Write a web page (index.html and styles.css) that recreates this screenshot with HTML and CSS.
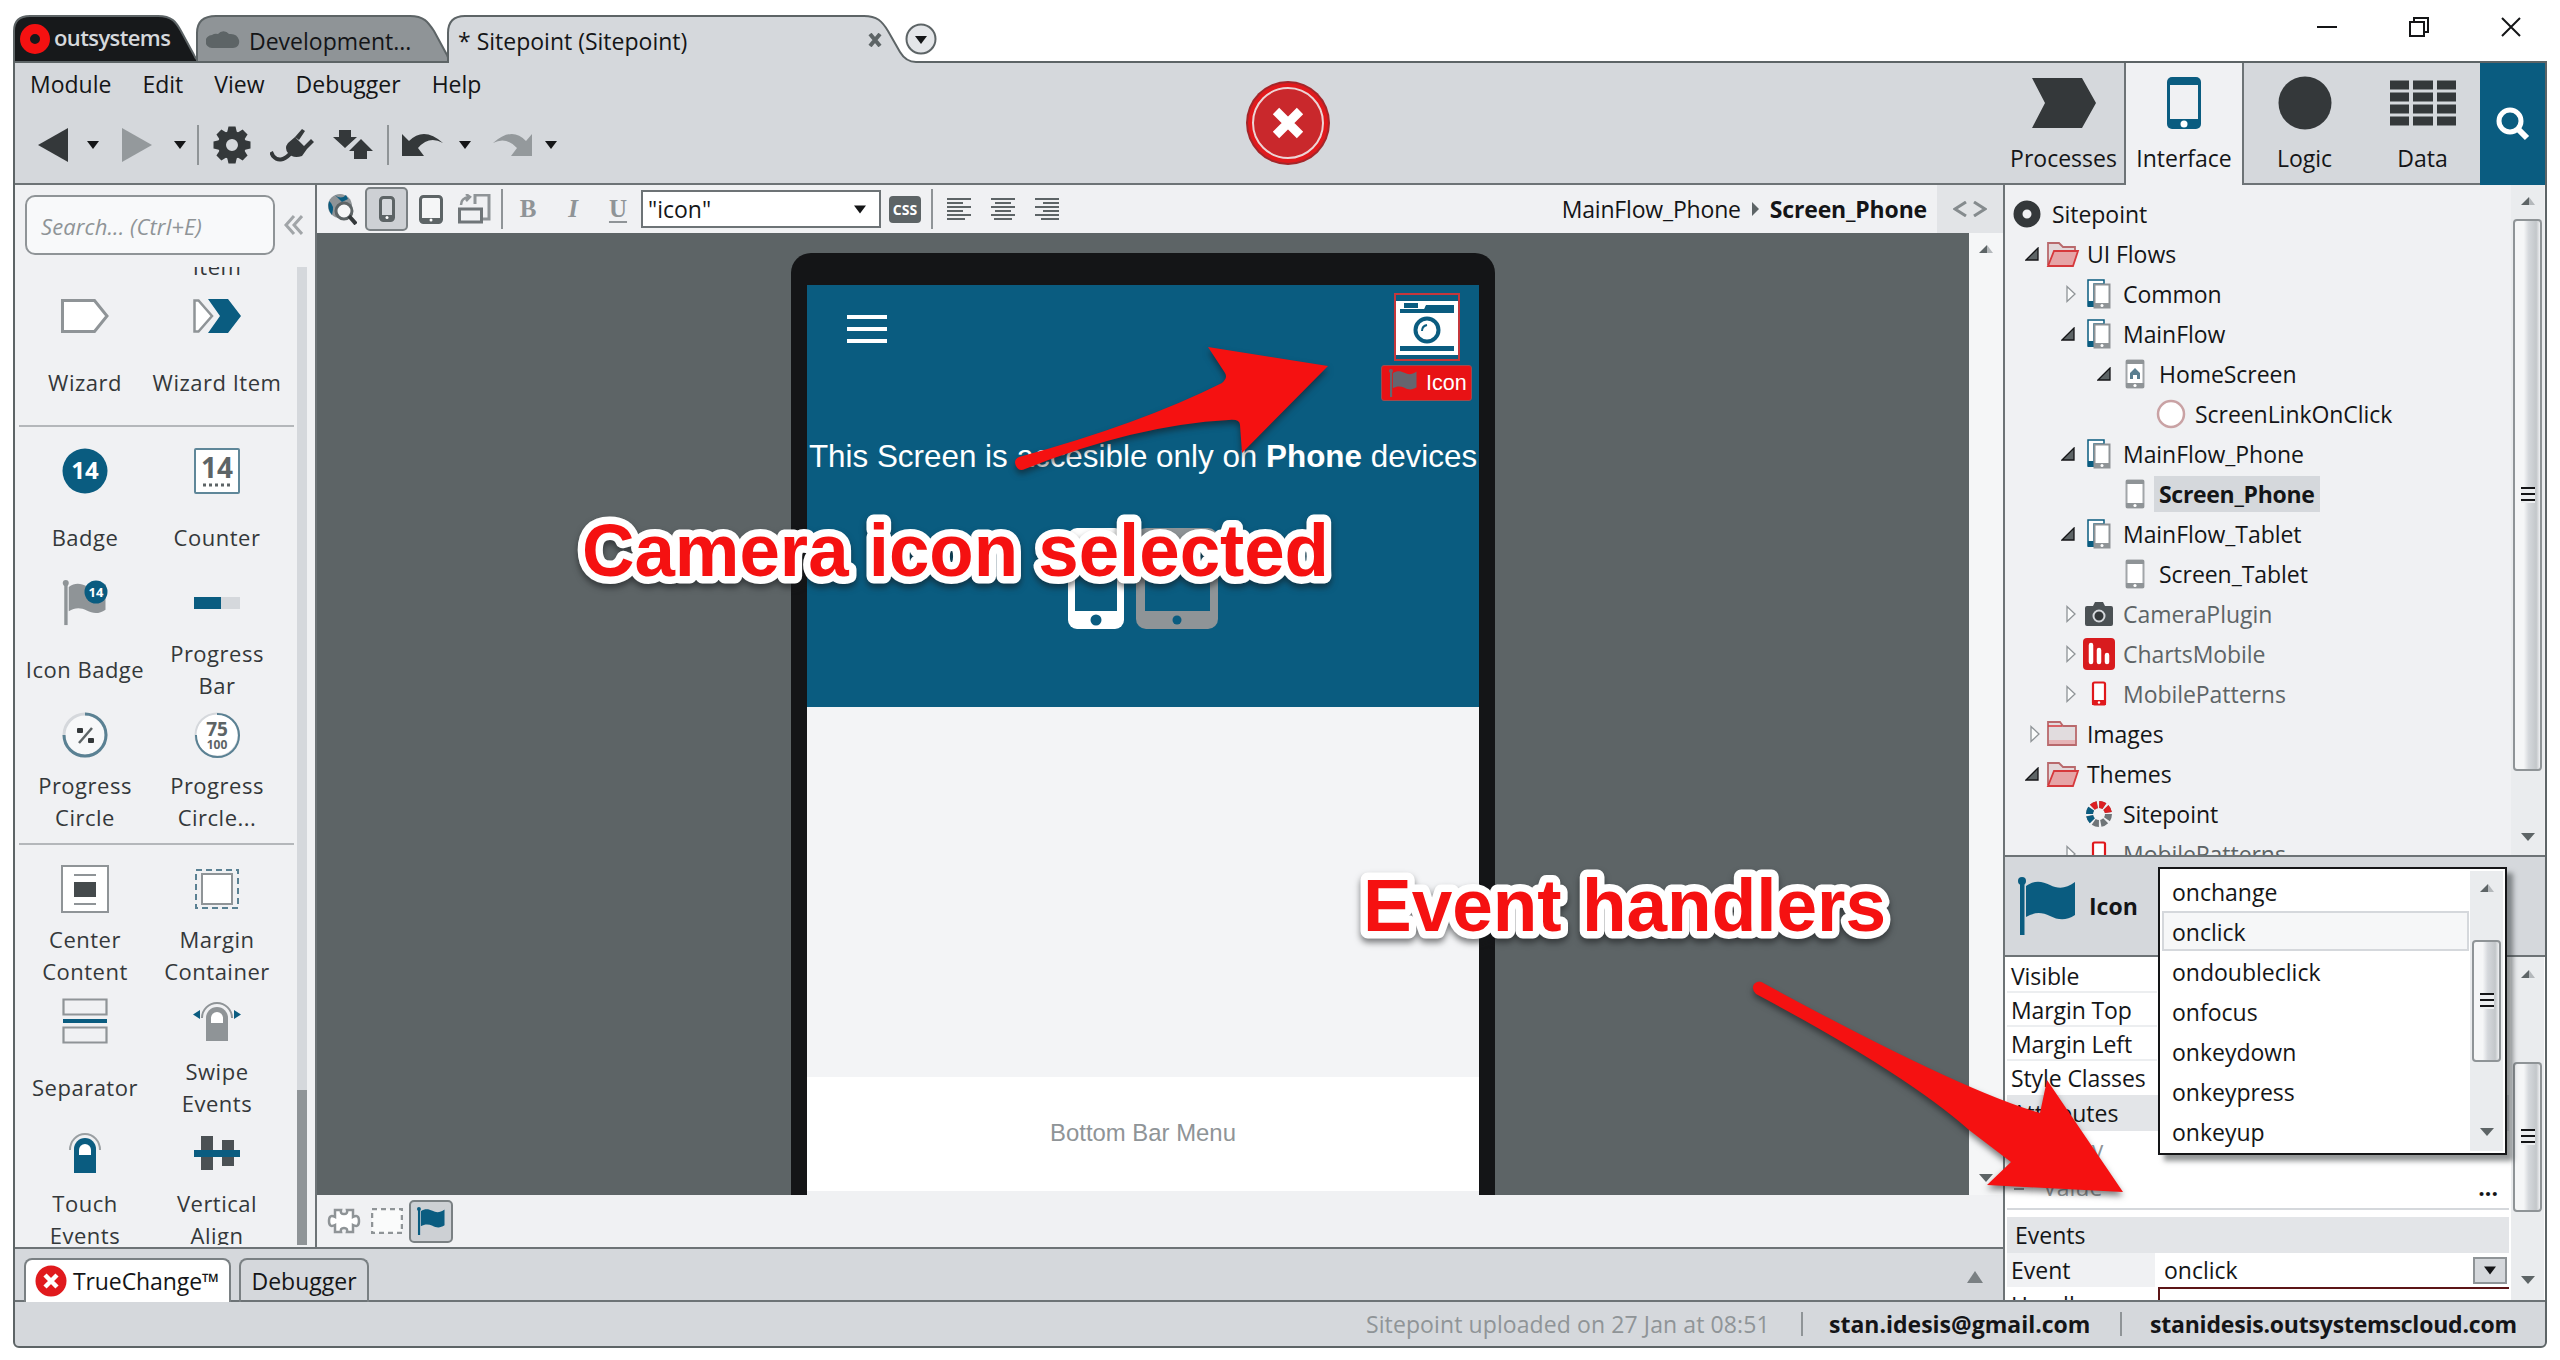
FILE: index.html
```html
<!DOCTYPE html>
<html lang="en">
<head>
<meta charset="utf-8">
<title>Sitepoint (Sitepoint)</title>
<link rel="stylesheet" href="styles.css">
</head>
<body>
<svg class="defs" width="0" height="0">
  <symbol id="down" viewBox="0 0 12 8"><path d="M0 0h12L6 8z" fill="#141517"/></symbol>
  <symbol id="sup" viewBox="0 0 14 8"><path d="M0 8L8 0v8z" fill="#5d6466"/><path d="M8 0l6 8H8z" fill="#b4b8bb"/></symbol>
  <symbol id="sdown" viewBox="0 0 14 8"><path d="M0 0h14L7 8z" fill="#5d6466"/></symbol>
  <symbol id="open" viewBox="0 0 14 14"><path d="M13 1v12H1z" fill="#5d6466" stroke="#141517" stroke-width="1.3"/></symbol>
  <symbol id="closed" viewBox="0 0 14 18"><path d="M4 1.500v15L12 9z" fill="#fafbfb" stroke="#8f9497" stroke-width="1.3"/></symbol>
  <symbol id="flow" viewBox="0 0 28 32"><path d="M3 2h16v4H9v22H3z" fill="#fff" stroke="#0a5c80" stroke-width="1.500"/><path d="M3 23h6v6H3z" fill="#0a5c80"/><rect x="9.500" y="6.500" width="15" height="23" fill="#fff" stroke="#8f9497" stroke-width="2"/><path d="M9 25h16v5H9z" fill="#8f9497"/><circle cx="17" cy="27.500" r="1.500" fill="#fff"/></symbol>
  <symbol id="scr" viewBox="0 0 20 30"><rect x="1.500" y="1.500" width="17" height="27" rx="1" fill="#fff" stroke="#a2a6a9" stroke-width="2"/><path d="M1 1h18v4H1zM1 24h18v5H1z" fill="#8f9497"/><circle cx="10" cy="26.500" r="1.600" fill="#fff"/></symbol>
  <symbol id="folderOpen" viewBox="0 0 34 28"><path d="M2 25V3h11l4 4h12v6" fill="#e3d8da" stroke="#b9696c" stroke-width="1.800"/><path d="M2 26L8 11h24l-5 15z" fill="#e6a4a6" stroke="#d6393c" stroke-width="1.800"/></symbol>
  <symbol id="folder" viewBox="0 0 34 28"><path d="M2 25V2h12l3 4h13v19z" fill="#e1dcde" stroke="#b9696c" stroke-width="1.800"/><path d="M2 6h14" stroke="#d6393c" stroke-width="1.500"/><path d="M3 20h26v4H3z" fill="#e6b4b6"/></symbol>
  <symbol id="redphone" viewBox="0 0 16 26"><rect x="2" y="1.500" width="12" height="22" rx="1.500" fill="#fff" stroke="#e0191c" stroke-width="2.200"/><path d="M1 19h14v5H1z" fill="#e0191c"/><circle cx="8" cy="21.500" r="1.200" fill="#fff"/></symbol>
  <symbol id="flag" viewBox="0 0 60 58"><circle cx="5" cy="4" r="4" fill="currentColor"/><path d="M3 4h4.500v54H3z" fill="currentColor"/><path d="M9 9c8-6 16-5 24-1s16 4 25-3v33c-9 6-17 5-25 1s-16-4-24 1z" fill="currentColor"/></symbol>
</svg>

<header class="titlebar">
  <div class="tab tab-logo">
    <svg class="tab-bg" width="186" height="48"><path d="M1 47V16Q1 1 17 1h128c14 0 18 6 23 15l13 24q2 5 5 6v1z" fill="#17191b" stroke="#5d6466" stroke-width="2"/></svg>
    <svg class="ring" width="30" height="30"><circle cx="15" cy="15" r="10" fill="none" stroke="#f51111" stroke-width="10"/></svg>
    <span class="brand">outsystems</span>
  </div>
  <div class="tab tab-dev">
    <svg class="tab-bg" width="254" height="48"><path d="M1 47V18Q1 1 20 1h194c14 0 18 6 24 15l13 24q2 5 2 7z" fill="#8f9497" stroke="#5d6466" stroke-width="2"/></svg>
    <svg class="cloud" width="34" height="20"><path d="M6 19a6 6 0 0 1 0-13 7 7 0 0 1 6-1 7 7 0 0 1 11 0q8-1 10 6c1 5-2 8-6 8z" fill="#5d6466"/></svg>
    <span>Development...</span>
  </div>
  <div class="tab tab-site">
    <svg class="tab-bg" width="476" height="50"><path d="M1 50V18Q1 1 18 1h399c13 0 18 5 24 15l12 21q6 10 16 10h7v3z" fill="#d5d8dc"/><path d="M1 48V18Q1 1 18 1h399c13 0 18 5 24 15l12 21q6 10 16 10h7" fill="none" stroke="#5d6466" stroke-width="2"/></svg>
    <span>* Sitepoint (Sitepoint)</span>
    <svg class="tab-x" width="14" height="14"><path d="M2 1l10 12M12 1L2 13" stroke="#5d6466" stroke-width="4"/></svg>
  </div>
  <svg class="tab-more" width="32" height="32"><circle cx="16" cy="16" r="14.500" fill="#e4e6e9" stroke="#5d6466" stroke-width="2"/><path d="M10 13h12l-6 8z" fill="#141517"/></svg>
  <div class="winctl">
    <svg width="20" height="20"><path d="M0 10h20" stroke="#141517" stroke-width="2"/></svg>
    <svg width="20" height="20"><path d="M5 5V1h14v14h-4M1 5h14v14H1z" fill="none" stroke="#141517" stroke-width="2"/></svg>
    <svg width="20" height="20"><path d="M1 1l18 18M19 1L1 19" stroke="#141517" stroke-width="2"/></svg>
  </div>
</header>

<div class="window">
  <div class="ribbon">
    <div class="ribbon-left">
      <nav class="menu"><span>Module</span><span>Edit</span><span>View</span><span>Debugger</span><span>Help</span></nav>
      <div class="tools">
        <svg width="30" height="34"><path d="M0 17L30 0v34z" fill="#34383a"/></svg>
        <svg width="12" height="8"><use href="#down"/></svg>
        <svg width="30" height="34"><path d="M30 17L0 0v34z" fill="#94999c"/></svg>
        <svg width="12" height="8"><use href="#down"/></svg>
        <i class="sep"></i>
        <svg width="38" height="38" viewBox="-19 -19 38 38"><g fill="#34383a"><path id="tooth" d="M-5-12l1.500-6.500h7L5-12z"/><use href="#tooth" transform="rotate(45)"/><use href="#tooth" transform="rotate(90)"/><use href="#tooth" transform="rotate(135)"/><use href="#tooth" transform="rotate(180)"/><use href="#tooth" transform="rotate(225)"/><use href="#tooth" transform="rotate(270)"/><use href="#tooth" transform="rotate(315)"/></g><circle r="10" fill="none" stroke="#34383a" stroke-width="8"/></svg>
        <svg width="44" height="34"><path d="M18 15l7-6 12 12-5 7q-9 3-14-3-4-5 0-10zM25 9l7-8 3 2-6 9zM34 18l7-7 3 3-8 8z" fill="#34383a"/><path d="M20 26Q10 36 3 28l-2-4" fill="none" stroke="#34383a" stroke-width="4"/></svg>
        <svg width="40" height="30"><path d="M6 0h12v7h6L12 18 0 7h6zM28 9l12 12h-6v8H21v-8h-5z" fill="#34383a"/></svg>
        <i class="sep"></i>
        <svg width="42" height="26"><path d="M0 2l7 7Q22-6 41 11 27 3 16 16l6 8H0z" fill="#34383a"/></svg>
        <svg width="12" height="8"><use href="#down"/></svg>
        <svg width="40" height="26"><path d="M39 2l-6 7Q19-6 0 11 13 4 24 16l-6 8h21z" fill="#94999c"/></svg>
        <svg width="12" height="8"><use href="#down"/></svg>
      </div>
    </div>
    <svg class="stop" width="86" height="86" viewBox="-43 -43 86 86"><circle r="42" fill="#a3262a"/><circle r="40" fill="#e01a1d"/><circle r="35" fill="#c9282c" stroke="#ecd5d6" stroke-width="2"/><path d="M-12-12l24 24M12-12l-24 24" stroke="#fff" stroke-width="9"/></svg>
    <div class="layers">
      <div class="layer"><svg width="64" height="50"><path d="M0 0h50l14 25-14 25H0l13-25z" fill="#34383a"/></svg><span>Processes</span></div>
      <div class="layer on"><svg width="36" height="52"><rect x="1" y="0" width="34" height="52" rx="5" fill="#0a5c80"/><path d="M4 8h28v34H4z" fill="#f0f1f3"/><circle cx="18" cy="47" r="3.500" fill="#fff"/></svg><span>Interface</span></div>
      <div class="layer"><svg width="54" height="54"><circle cx="27" cy="27" r="26.500" fill="#34383a"/></svg><span>Logic</span></div>
      <div class="layer"><svg width="66" height="46"><path d="M0 5h19M23 5h20M47 5h19M0 17h19M23 17h20M47 17h19M0 29h19M23 29h20M47 29h19M0 41h19M23 41h20M47 41h19" stroke="#34383a" stroke-width="9"/></svg><span>Data</span></div>
      <div class="finder"><svg width="34" height="34"><circle cx="14" cy="14" r="11" fill="none" stroke="#fff" stroke-width="5"/><path d="M21 21l10 10" stroke="#fff" stroke-width="6"/></svg></div>
    </div>
  </div>

  <div class="main">
    <div class="work">
      <div class="upper">
        <aside class="palette">
          <div class="search-row"><div class="search">Search... (Ctrl+E)</div><svg width="20" height="20"><path d="M11 1L3 10l8 9M19 1l-8 9 8 9" fill="none" stroke="#a1a5a8" stroke-width="3"/></svg></div>
          <div class="palette-body">
            <div class="widgets">
              <div class="clipped"><span>Item</span></div>
              <div class="group first">
                <div class="cell"><svg width="48" height="34"><path d="M1.500 1.500h32L46 17 33.500 32.500h-32z" fill="#fff" stroke="#8f9497" stroke-width="3"/></svg><p>Wizard</p></div>
                <div class="cell"><svg width="48" height="34"><path d="M1.500 1.500h4L19 17 5.500 32.500h-4z" fill="#fff" stroke="#8f9497" stroke-width="2.500"/><path d="M15 0h20l13 17-13 17H15l12-17z" fill="#0a5c80"/></svg><p>Wizard Item</p></div>
              </div>
              <div class="group">
                <div class="cell"><svg width="46" height="46"><circle cx="23" cy="23" r="22.500" fill="#0a5c80"/><text x="23" y="31" class="ic" font-size="24" fill="#fff">14</text></svg><p>Badge</p></div>
                <div class="cell"><svg width="46" height="46"><rect x="1" y="1" width="44" height="44" rx="1" fill="#fff" stroke="#5f8799" stroke-width="2"/><text x="23" y="30" class="ic" font-size="28" fill="#5d6466">14</text><path d="M9 37h28" stroke="#5d6466" stroke-width="3" stroke-dasharray="3 3"/></svg><p>Counter</p></div>
                <div class="cell"><svg width="46" height="46"><g transform="scale(.75 .78)" color="#8f9497"><use href="#flag" width="60" height="58"/></g><circle cx="34" cy="12" r="11.500" fill="#0a5c80"/><text x="34" y="16.500" class="ic" font-size="13" fill="#fff">14</text></svg><p>Icon Badge</p></div>
                <div class="cell"><svg width="46" height="12"><path d="M0 0h27v12H0z" fill="#0a5c80"/><path d="M27 0h19v12H27z" fill="#d5d8dc"/></svg><p>Progress Bar</p></div>
                <div class="cell"><svg width="46" height="46"><circle cx="23" cy="23" r="21" fill="#f7f8f9" stroke="#d5d8dc" stroke-width="3"/><path d="M23 2a21 21 0 1 1-21 21" fill="none" stroke="#5a8193" stroke-width="3"/><path d="M30 16L17 31" stroke="#5d6466" stroke-width="2.500"/><rect x="15" y="16" width="6" height="5" rx="1" fill="#34383a"/><rect x="26" y="26" width="6" height="5" rx="1" fill="#34383a"/></svg><p>Progress Circle</p></div>
                <div class="cell"><svg width="46" height="46"><circle cx="23" cy="23" r="21.500" fill="#fff" stroke="#d5d8dc" stroke-width="2"/><path d="M23 2a21.500 21.500 0 1 1-21 21" fill="none" stroke="#5a8193" stroke-width="2"/><text x="23" y="24" class="ic" font-size="19" fill="#5d6466">75</text><text x="23" y="37" class="ic" font-size="12" fill="#5d6466">100</text></svg><p>Progress Circle...</p></div>
              </div>
              <div class="group">
                <div class="cell"><svg width="48" height="48"><path d="M1 1h46v46H1z" fill="#fff" stroke="#8f9497" stroke-width="2"/><path d="M13 10h22M13 39h22" stroke="#8f9497" stroke-width="2"/><path d="M13 17h22v15H13z" fill="#454a4c"/></svg><p>Center Content</p></div>
                <div class="cell"><svg width="44" height="40"><path d="M1 1h42v38H1z" fill="none" stroke="#5a8193" stroke-width="2" stroke-dasharray="6 4"/><path d="M7 5h30v30H7z" fill="#fff" stroke="#8f9497" stroke-width="2"/></svg><p>Margin Container</p></div>
                <div class="cell"><svg width="46" height="46"><path d="M1.500 1.500h43v15h-43zM1.500 29.500h43v15h-43z" fill="#f0f1f3" stroke="#8f9497" stroke-width="2.200"/><path d="M1 23h44" stroke="#0a5c80" stroke-width="4"/></svg><p>Separator</p></div>
                <div class="cell"><svg width="48" height="42"><path d="M13 41V18a11 11 0 0 1 22 0v23z" fill="#8f9497"/><path d="M18 23v-5a6 6 0 0 1 12 0v5z" fill="#fff"/><path d="M9 18a15 15 0 0 1 30 0" fill="none" stroke="#8f9497" stroke-width="2"/><path d="M7 10v9l-7-4.500zM41 10v9l7-4.500z" fill="#0a5c80"/></svg><p>Swipe Events</p></div>
                <div class="cell"><svg width="32" height="42"><path d="M5 41V17a11 11 0 0 1 22 0v24z" fill="#0a5c80"/><path d="M10 23v-5a6 6 0 0 1 12 0v5z" fill="#fff"/><path d="M1 18a15 16 0 0 1 30 0" fill="none" stroke="#9a9fa2" stroke-width="2"/></svg><p>Touch Events</p></div>
                <div class="cell"><svg width="46" height="34"><path d="M7 0h12v34H7zM28 4h12v26H28z" fill="#4b5154"/><path d="M0 14h46v7H0z" fill="#0a5c80"/></svg><p>Vertical Align</p></div>
              </div>
            </div>
            <div class="slim"><i></i></div>
          </div>
        </aside>

        <section class="editor">
          <div class="edit-bar">
            <div class="edit-tools">
              <svg width="30" height="32"><circle cx="13" cy="13" r="12" fill="#8f9497"/><path d="M2 8q6 4 3 14-5-6-3-14zM8 2q6 5 11 0l2 4-6 3z" fill="#0a5c80"/><circle cx="17" cy="18" r="8" fill="#f5f6f7" stroke="#5d6466" stroke-width="3"/><path d="M22 23l7 8" stroke="#34383a" stroke-width="4"/></svg>
              <div class="press"><svg width="16" height="26"><rect x="1.500" y="1.500" width="13" height="23" rx="3" fill="#d5d8dc" stroke="#5d6466" stroke-width="3"/><path d="M1 19h14v5H1z" fill="#5d6466"/><circle cx="8" cy="21.500" r="1.500" fill="#fff"/></svg></div>
              <svg width="24" height="29"><rect x="1.500" y="1.500" width="21" height="26" rx="3" fill="#f5f6f7" stroke="#5d6466" stroke-width="3"/><path d="M2 23h20v5H2z" fill="#5d6466"/><circle cx="12" cy="25" r="1.500" fill="#fff"/></svg>
              <svg width="33" height="30"><path d="M17 10V1h14v24h-6" fill="none" stroke="#8f9497" stroke-width="3"/><rect x="1.500" y="15" width="22" height="13" fill="#f0f1f3" stroke="#6f7578" stroke-width="3"/><path d="M3 11q0-7 8-8M8 0l4 3-4 4" fill="none" stroke="#8f9497" stroke-width="2.500"/></svg>
              <i class="sep"></i>
              <b class="fmt">B</b><b class="fmt it">I</b><b class="fmt un">U</b>
              <div class="combo"><span>"icon"</span><svg width="12" height="9"><use href="#down"/></svg></div>
              <div class="css">CSS</div>
              <i class="sep"></i>
              <svg width="24" height="24"><path d="M0 2h24M0 6h16M0 10h24M0 14h16M0 18h24M0 22h18" stroke="#5d6466" stroke-width="2"/></svg>
              <svg width="24" height="24"><path d="M0 2h24M4 6h16M0 10h24M4 14h16M0 18h24M3 22h18" stroke="#5d6466" stroke-width="2"/></svg>
              <svg width="24" height="24"><path d="M0 2h24M8 6h16M0 10h24M8 14h16M0 18h24M6 22h18" stroke="#5d6466" stroke-width="2"/></svg>
            </div>
            <div class="crumbs"><span class="c1">MainFlow_Phone</span><svg width="9" height="14"><path d="M1 0l7 7-7 7z" fill="#5d6466"/></svg><b>Screen_Phone</b></div>
            <div class="code"><svg width="34" height="16"><path d="M13 1L2 8l11 7M21 1l11 7-11 7" fill="none" stroke="#858b8e" stroke-width="3"/></svg></div>
          </div>
          <div class="stage">
            <div class="canvas">
              <div class="device">
                <div class="screen">
                  <div class="hero">
                    <div class="topbar">
                      <svg width="41" height="29"><path d="M0 2h40M0 14h40M0 26h40" stroke="#fff" stroke-width="4"/></svg>
                      <div class="picked">
                        <svg width="66" height="68"><rect x="1" y="1" width="64" height="66" fill="none" stroke="#c4373c" stroke-width="2"/><path d="M2 8h62v54H2z" fill="#fff"/><path d="M6 16h24l2-4h28v8H6zM10 10h14v5H10zM6 53h54v5H6z" fill="#0a5c80"/><path d="M6 10h3v2H6zM25 10h7l-2 6h-5z" fill="#fff"/><circle cx="33" cy="37" r="11.500" fill="#fff" stroke="#0a5c80" stroke-width="4"/><path d="M28 38q0-5 5-6" fill="none" stroke="#0a5c80" stroke-width="2"/></svg>
                        <div class="tag"><svg width="32" height="28" viewBox="0 0 60 58" color="#65656e"><use href="#flag"/></svg>Icon</div>
                      </div>
                    </div>
                    <p class="msg">This Screen is accesible only on <b>Phone</b> devices</p>
                    <div class="kinds">
                      <svg width="56" height="101"><rect width="56" height="101" rx="9" fill="#fff"/><path d="M7 14h42v69H7z" fill="#0a5c80"/><circle cx="28" cy="92" r="5.500" fill="#0a5c80"/></svg>
                      <svg width="82" height="101"><rect width="82" height="101" rx="10" fill="#8f9497"/><path d="M9 12h65v71H9z" fill="#0a5c80"/><circle cx="41" cy="92" r="4.500" fill="#0a5c80"/></svg>
                    </div>
                  </div>
                  <div class="blank"></div>
                  <div class="bottom">Bottom Bar Menu</div>
                </div>
              </div>
            </div>
            <div class="rail"><svg width="14" height="8"><use href="#sup"/></svg><svg width="14" height="8"><use href="#sdown"/></svg></div>
          </div>
          <div class="modes">
            <svg width="34" height="26"><path d="M8 2h6q-1 4 3 4t3-4h6v7q6-3 6 4t-6 4v7h-6q1-4-3-4t-3 4H8v-7q-6 3-6-4t6-4z" fill="#fff" stroke="#8f9497" stroke-width="2.500"/></svg>
            <svg width="32" height="26"><path d="M1 1h30v24H1z" fill="#fafbfb" stroke="#8f9497" stroke-width="2.500" stroke-dasharray="5 4"/></svg>
            <div class="press flagbtn"><svg width="32" height="28" viewBox="0 0 60 58" color="#0a5c80"><use href="#flag"/></svg></div>
          </div>
        </section>
      </div>
      <div class="dock">
        <div class="dtab on"><svg width="32" height="32" viewBox="-16 -16 32 32"><circle r="15.500" fill="#e01a1d"/><path d="M-6-6L6 6M6-6L-6 6" stroke="#fff" stroke-width="4.500"/></svg><span>TrueChange™</span></div>
        <div class="dtab dbg"><span>Debugger</span></div>
        <svg class="dock-up" width="16" height="12"><path d="M0 12L8 0l8 12z" fill="#7a8083"/></svg>
      </div>
    </div>

    <aside class="side">
      <div class="treebox">
        <div class="tree">
          <div class="row l0"><i class="in"><svg width="30" height="30"><circle cx="15" cy="15" r="9" fill="none" stroke="#34383a" stroke-width="9"/></svg></i><span>Sitepoint</span></div>
          <div class="row l1"><i class="ar"><svg width="14" height="14"><use href="#open"/></svg></i><i class="in"><svg width="34" height="28"><use href="#folderOpen"/></svg></i><span>UI Flows</span></div>
          <div class="row l2"><i class="ar cl"><svg width="14" height="18"><use href="#closed"/></svg></i><i class="in"><svg width="28" height="32"><use href="#flow"/></svg></i><span>Common</span></div>
          <div class="row l2"><i class="ar"><svg width="14" height="14"><use href="#open"/></svg></i><i class="in"><svg width="28" height="32"><use href="#flow"/></svg></i><span>MainFlow</span></div>
          <div class="row l3"><i class="ar"><svg width="14" height="14"><use href="#open"/></svg></i><i class="in"><svg width="20" height="30"><use href="#scr"/><path d="M5 14l5-5 5 5v6h-3v-4H8v4H5z" fill="#5a7f90"/></svg></i><span>HomeScreen</span></div>
          <div class="row l4"><i class="ar"></i><i class="in"><svg width="30" height="30"><circle cx="15" cy="15" r="13" fill="#fff" stroke="#c9a2a4" stroke-width="2.500"/></svg></i><span>ScreenLinkOnClick</span></div>
          <div class="row l2"><i class="ar"><svg width="14" height="14"><use href="#open"/></svg></i><i class="in"><svg width="28" height="32"><use href="#flow"/></svg></i><span>MainFlow_Phone</span></div>
          <div class="row l3"><i class="ar"></i><i class="in"><svg width="20" height="30"><use href="#scr"/></svg></i><span class="sel">Screen_Phone</span></div>
          <div class="row l2"><i class="ar"><svg width="14" height="14"><use href="#open"/></svg></i><i class="in"><svg width="28" height="32"><use href="#flow"/></svg></i><span>MainFlow_Tablet</span></div>
          <div class="row l3"><i class="ar"></i><i class="in"><svg width="20" height="30"><use href="#scr"/></svg></i><span>Screen_Tablet</span></div>
          <div class="row l2 dim"><i class="ar cl"><svg width="14" height="18"><use href="#closed"/></svg></i><i class="in"><svg width="28" height="26"><path d="M2 5h6l2-4h8l2 4h6q2 0 2 2v16q0 2-2 2H2q-2 0-2-2V7q0-2 2-2z" fill="#4b5154"/><circle cx="14" cy="15" r="5.500" fill="#34383a" stroke="#d5d8dc" stroke-width="2"/></svg></i><span>CameraPlugin</span></div>
          <div class="row l2 dim"><i class="ar cl"><svg width="14" height="18"><use href="#closed"/></svg></i><i class="in"><svg width="32" height="32"><rect width="32" height="32" rx="4" fill="#d81b1e"/><path d="M8 7v17M16 12v12M24 17v7" stroke="#fff" stroke-width="4.500" stroke-linecap="round"/></svg></i><span>ChartsMobile</span></div>
          <div class="row l2 dim"><i class="ar cl"><svg width="14" height="18"><use href="#closed"/></svg></i><i class="in"><svg width="16" height="26"><use href="#redphone"/></svg></i><span>MobilePatterns</span></div>
          <div class="row l1"><i class="ar cl"><svg width="14" height="18"><use href="#closed"/></svg></i><i class="in"><svg width="34" height="28"><use href="#folder"/></svg></i><span>Images</span></div>
          <div class="row l1"><i class="ar"><svg width="14" height="14"><use href="#open"/></svg></i><i class="in"><svg width="34" height="28"><use href="#folderOpen"/></svg></i><span>Themes</span></div>
          <div class="row l2"><i class="ar"></i><i class="in"><svg width="28" height="28" viewBox="-14 -14 28 28" fill="none" stroke-width="7"><circle r="9.500" stroke="#6f7578" stroke-dasharray="5.500 1.960"/><path d="M-6.700-6.700A9.500 9.500 0 0 1 9.500 0" stroke="#dd1f22" stroke-dasharray="5.500 1.960"/><path d="M-6.700 6.700A9.500 9.500 0 0 1-6.700-6.700" stroke="#0a5c80" stroke-dasharray="5.500 1.960"/></svg></i><span>Sitepoint</span></div>
          <div class="row l2 dim"><i class="ar cl"><svg width="14" height="18"><use href="#closed"/></svg></i><i class="in"><svg width="16" height="26"><use href="#redphone"/></svg></i><span>MobilePatterns</span></div>
        </div>
        <div class="bar b-tree"><svg width="14" height="8"><use href="#sup"/></svg><div class="thumb"><i></i></div><svg width="14" height="8"><use href="#sdown"/></svg></div>
      </div>
      <div class="prop-head"><svg width="60" height="58" color="#0a5c80"><use href="#flag"/></svg><b>Icon</b></div>
      <div class="props">
        <div class="grid">
          <div class="pr">Visible</div>
          <div class="pr">Margin Top</div>
          <div class="pr">Margin Left</div>
          <div class="pr last">Style Classes</div>
          <div class="ph">Attributes</div>
          <div class="sub">Property</div>
          <div class="sub val"><span><i></i>Value</span><b>...</b></div>
          <div class="ph ev">Events</div>
          <div class="evrow"><span>Event</span><div>onclick<em><svg width="12" height="9"><use href="#down"/></svg></em></div></div>
          <div class="handler"><span>Handler</span><div></div></div>
        </div>
        <div class="bar b-prop"><svg width="14" height="8"><use href="#sup"/></svg><div class="thumb"><i></i></div><svg width="14" height="8"><use href="#sdown"/></svg></div>
      </div>
    </aside>
  </div>
  <footer class="status"><span class="up">Sitepoint uploaded on 27 Jan at 08:51</span><i></i><b class="mail">stan.idesis@gmail.com</b><i></i><b class="host">stanidesis.outsystemscloud.com</b></footer>
</div>

<div class="popup">
  <ul><li>onchange</li><li class="cur">onclick</li><li>ondoubleclick</li><li>onfocus</li><li>onkeydown</li><li>onkeypress</li><li>onkeyup</li></ul>
  <div class="bar b-pop"><svg width="14" height="8"><use href="#sup"/></svg><div class="thumb"><i></i></div><svg width="14" height="8"><use href="#sdown"/></svg></div>
</div>

<svg class="notes" width="2560" height="1360">
  <path d="M1328 366L1208 347l17 26q3 5-3 10Q1140 424 1019 457q-6 3-3 9 3 6 9 3 110-44 204-49 11-1 11 5l2 28z"/>
  <path d="M2123 1192l-76-112-7 33Q1960 1090 1765 984q-6-5-11 0-3 5 2 10 150 80 213 136l42 32-24 23z"/>
  <text x="582" y="576" textLength="747" lengthAdjust="spacingAndGlyphs">Camera icon selected</text>
  <text x="1363" y="931" textLength="523" lengthAdjust="spacingAndGlyphs">Event handlers</text>
</svg>
</body>
</html>
```
FILE: styles.css
```css
* { box-sizing: border-box; }
body { margin: 0; width: 2560px; height: 1360px; overflow: hidden; background: #fff; color: #141517; font: 23px "Open Sans", "Noto Sans", sans-serif; position: relative; white-space: nowrap; }
svg { display: block; flex: none; }
p, ul { margin: 0; padding: 0; list-style: none; }
i { font-style: normal; }
.defs { position: absolute; }

/* title bar */
.titlebar { height: 61px; padding: 15px 0 0 13px; display: flex; }
.tab { position: relative; height: 48px; display: flex; align-items: center; z-index: 2; }
.tab-bg { position: absolute; left: 0; top: 0; z-index: -1; }
.tab-logo { width: 183px; padding-left: 7px; z-index: 1; }
.brand { margin: -5px 0 0 4px; color: #d5d8dc; font-weight: 600; font-size: 22px; letter-spacing: -.6px; }
.tab-dev { width: 251px; padding-left: 10px; z-index: 1; }
.cloud { margin: -1px 9px 0 0; }
.tab-dev span, .tab-site span { padding-top: 3px; }
.tab-site { width: 465px; padding-left: 11px; }
.tab-x { margin: 2px 30px 0 auto; }
.tab-more { margin: 8px 0 0 -7px; z-index: 3; }
.winctl { margin: 2px 39px 0 auto; display: flex; gap: 72px; height: 20px; }

/* window frame */
.window { margin-left: 13px; width: 2534px; height: 1287px; border: 2px solid #5d6466; border-radius: 0 0 6px 6px; background: #d5d8dc; display: flex; flex-direction: column; overflow: hidden; }
.ribbon { height: 122px; border-bottom: 2px solid #6d7376; display: flex; position: relative; flex: none; }
.ribbon-left { width: 1230px; }
.menu { display: flex; gap: 31px; padding: 4px 0 0 15px; height: 62px; line-height: 34px; }
.tools { display: grid; align-items: center; height: 40px; grid-template-columns: 49px 35px 52px 23px 16px 57px 63px 54px 15px 57px 34px 52px 20px; padding-left: 23px; }
.sep { width: 2px; height: 40px; background: #8f9497; }
.stop { margin-top: 17px; }
.layers { margin-left: auto; display: flex; height: 122px; }
.layer { width: 121px; display: flex; flex-direction: column; align-items: center; height: 120px; }
.layer svg { margin: auto 0; }
.layer span { height: 42px; line-height: 34px; }
.layer.on { width: 120px; height: 122px; background: #f0f1f3; border: 2px solid #6d7376; border-width: 0 2px; }
.layer.on span { height: 44px; }
.layer:nth-child(4) { width: 115px; }
.layer svg { position: relative; top: 1px; }
.finder { width: 65px; height: 122px; background: #0a5c80; display: grid; place-items: center; }

.main { height: 1117px; display: flex; flex: none; }
.work { width: 1988px; display: flex; flex-direction: column; }
.upper { height: 1064px; display: flex; border-bottom: 2px solid #6d7376; }

/* widget palette */
.palette { width: 302px; border-right: 2px solid #6d7376; background: #f0f1f3; }
.search-row { height: 82px; padding: 10px 0 0 10px; display: flex; }
.search-row svg { margin: 20px 0 0 8px; }
.search { width: 250px; height: 60px; border: 2px solid #8f9497; border-radius: 10px; background: #f8f9fa; color: #8f9497; font-style: italic; line-height: 58px; padding-left: 14px; font-size: 22px; letter-spacing: .1px; }
.palette-body { display: flex; height: 978px; overflow: hidden; }
.widgets { width: 279px; padding-left: 4px; margin-right: 4px; color: #34383a; font-size: 22px; letter-spacing: .5px; }
.clipped { margin: -17px 0 1px; height: 32px; line-height: 32px; display: grid; grid-template-columns: 132px 132px; text-align: center; }
.clipped span { grid-column: 2; }
.group { display: grid; grid-template-columns: 132px 132px; grid-auto-rows: 132px; padding-top: 11px; border-top: 2px solid #b4b7ba; margin-bottom: 9px; }
.group.first { padding: 0; border: 0; margin-bottom: 10px; }
.cell { display: flex; flex-direction: column; align-items: center; }
.cell svg { margin: auto; }
.cell p { height: 66px; display: flex; align-items: center; justify-content: center; text-align: center; white-space: normal; line-height: 32px; width: 132px; padding-bottom: 1px; }
.slim { width: 10px; background: #d5d8dc; display: flex; align-items: flex-end; margin-left: -1px; }
.slim i { width: 10px; height: 155px; background: #8f9497; }
.ic { font-weight: 700; text-anchor: middle; letter-spacing: 0; }

/* editor */
.editor { width: 1686px; background: #f0f1f3; }
.edit-bar { height: 48px; display: flex; align-items: center; }
.edit-tools { display: grid; align-items: center; padding-left: 10px; width: 1150px; grid-template-columns: 38px 54px 39px 43px 15px 45px 45px 35px 248px 42px 16px 44px 44px 30px; }
.press { width: 43px; height: 44px; border: 2px solid #7a8083; border-radius: 5px; background: #cdd0d4; display: grid; place-items: center; }
.fmt { font: 700 25px "Liberation Serif", serif; color: #8f9497; width: 24px; text-align: center; }
.it { font-style: italic; }
.un { text-decoration: underline; text-underline-offset: 4px; }
.combo { width: 240px; height: 38px; background: #fff; border: 2px solid #6d7376; display: flex; align-items: center; justify-content: space-between; padding: 0 13px 0 5px; }
.css { width: 32px; height: 27px; background: #5d6466; border-radius: 4px; color: #fff; font: 700 14px/27px "Open Sans", sans-serif; text-align: center; }
.crumbs { margin-left: auto; display: flex; align-items: center; gap: 10px; margin-right: 10px; }
.c1, .crumbs b { letter-spacing: -.17px; }
.code { width: 66px; height: 48px; background: #e2e4e7; display: grid; place-items: center; }
.stage { display: flex; height: 962px; }
.canvas { width: 1652px; background: #5d6466; padding: 20px 0 0 474px; }
.device { width: 704px; height: 942px; background: #141517; border-radius: 20px 20px 0 0; padding: 32px 16px 0; }
.screen { height: 910px; background: #f0f1f3; display: flex; flex-direction: column; }
.hero { height: 422px; background: #0a5c80; color: #fff; font-family: "Liberation Sans", Arial, sans-serif; }
.topbar { display: flex; justify-content: space-between; padding: 8px 7px 0 40px; height: 148px; }
.topbar > svg { margin-top: 22px; }
.picked { display: flex; flex-direction: column; align-items: center; width: 91px; }
.tag { margin-top: 4px; width: 91px; height: 36px; background: #e81215; border: 1px solid #9c4b50; border-radius: 3px; display: flex; align-items: center; gap: 7px; padding-left: 5px; font-size: 21.500px; }
.msg { text-align: center; font-size: 31.4px; line-height: 48px; height: 95px; }
.kinds { display: flex; gap: 12px; padding-left: 261px; }
.blank { height: 370px; background: #f3f4f6; }
.bottom { height: 114px; background: #fff; color: #8f9497; text-align: center; font: 23.900px/112px "Liberation Sans", Arial, sans-serif; }
.rail { width: 34px; background: #f5f6f7; display: flex; flex-direction: column; justify-content: space-between; align-items: center; padding: 12px 0 13px; }
.modes { display: flex; align-items: center; height: 52px; padding: 0 0 0 10px; gap: 10px; }
.flagbtn { width: 44px; height: 43px; margin-left: -4px; }

/* bottom dock */
.dock { height: 53px; display: flex; padding: 9px 0 0 9px; border-bottom: 2px solid #6d7376; gap: 8px; }
.dtab { height: 44px; border: 2px solid #7a8083; border-bottom: 0; border-radius: 8px 8px 0 0; display: flex; align-items: center; }
.dtab.on { width: 207px; background: #fff; padding-left: 9px; gap: 6px; letter-spacing: -.1px; }
.dbg { width: 130px; justify-content: center; }
.dock-up { margin: 13px 20px 0 auto; }

/* right side */
.side { width: 542px; border-left: 2px solid #6d7376; border-bottom: 2px solid #6d7376; display: flex; flex-direction: column; }
.treebox { height: 672px; border-bottom: 2px solid #6d7376; background: #f0f1f3; display: flex; flex: none; }
.tree { width: 506px; height: 670px; overflow: hidden; padding-top: 9px; }
.row { display: flex; align-items: center; height: 40px; letter-spacing: -.05px; }
.row span { margin-left: 7px; }
.row.l0 span { margin-left: 8px; }
.row .sel { margin-left: 2px; padding: 0 5px; background: #d5d8dc; height: 36px; line-height: 37px; font-weight: 700; letter-spacing: -.3px; }
.in { width: 36px; display: flex; justify-content: center; padding-left: 2px; }
.ar { width: 24px; display: flex; justify-content: center; }
.ar.cl { padding-left: 3px; }
.l0 { padding-left: 3px; }
.l1 { padding-left: 15px; }
.l2 { padding-left: 51px; }
.l3 { padding-left: 87px; }
.l4 { padding-left: 123px; }
.dim { color: #5d6466; }
.bar { background: #eaecee; display: flex; flex-direction: column; align-items: center; flex: none; }
.thumb { width: 29px; border: 2px solid #8f9497; border-radius: 4px; background: linear-gradient(90deg, #f5f6f7 0 35%, #d5d8dc 55%, #c3c7ca 85%, #f0f1f3); display: grid; place-items: center; }
.thumb i { width: 14px; height: 16px; background: repeating-linear-gradient(#141517 0 2px, #eceef0 2px 6px); }
.b-tree { width: 33px; padding: 12px 0 14px; }
.b-tree .thumb { height: 552px; margin: 14px 0 auto; }
.prop-head { height: 100px; border-bottom: 2px solid #6d7376; display: flex; flex: none; padding: 20px 0 0 12px; gap: 12px; }
.prop-head b { line-height: 58px; font-size: 23px; }
.props { flex: 1; background: #fff; display: flex; overflow: hidden; }
.grid { width: 502px; height: 343px; overflow: hidden; margin: 2px 2px 0; }
.pr { height: 34px; line-height: 35px; border-bottom: 2px solid #eceef0; padding-left: 4px; width: 150px; letter-spacing: -.1px; }
.pr.last { border: 0; }
.ph { height: 36px; line-height: 37px; background: #e3e5e8; padding-left: 5px; }
.sub { height: 38px; line-height: 36px; color: #8f9497; padding-left: 3px; }
.val { height: 41px; display: flex; justify-content: space-between; padding: 0 11px 0 36px; border-bottom: 2px solid #d5d8dc; margin-bottom: 7px; }
.val b { color: #141517; }
.val i { display: inline-block; width: 10px; height: 2px; margin: 0 19px 6px -29px; background: #8f9497; }
.ev { padding-left: 8px; }
.evrow { display: flex; height: 34px; line-height: 35px; }
.evrow span { width: 148px; background: #f0f1f3; padding-left: 4px; margin-right: 3px; }
.evrow div { flex: 1; display: flex; justify-content: space-between; align-items: center; padding: 0 2px 0 6px; }
.evrow em { width: 34px; height: 27px; border: 2px solid #8f9497; background: #d5d8dc; display: grid; place-items: center; }
.handler { display: flex; height: 40px; line-height: 36px; }
.handler span { width: 151px; padding-left: 4px; }
.handler div { flex: 1; border: 2px solid #5c1517; border-width: 2px 0 0 2px; }
.b-prop { width: 33px; padding: 13px 0 16px; }
.b-prop .thumb { height: 150px; margin: 84px 0 auto; }

.status { flex: 1; display: flex; align-items: center; }
.status .up { margin-left: 1351px; width: 435px; color: #8f9497; letter-spacing: .1px; }
.status i { width: 2px; height: 24px; background: #8f9497; }
.mail { margin-left: 26px; width: 291px; }
.host { margin-left: 28px; letter-spacing: -.2px; }

/* event drop-down */
.popup { position: absolute; left: 2158px; top: 867px; width: 349px; height: 288px; border: 2px solid #141517; background: #fff; box-shadow: 6px 6px 5px rgba(40,45,48,.5); padding: 2px; display: flex; justify-content: space-between; }
.popup li { height: 40px; line-height: 43px; padding-left: 10px; width: 307px; }
.popup .cur { background: #f6f7f8; border: 2px solid #d5d8dc; line-height: 39px; padding-left: 8px; }
.b-pop { width: 33px; padding: 13px 0 15px; }
.b-pop .thumb { height: 122px; margin: 48px 0 auto; }

/* callouts drawn over the window */
.notes { position: absolute; left: 0; top: 0; filter: drop-shadow(0 4px 3px rgba(20,21,23,.55)); }
.notes path { fill: #f51111; }
.notes text { font: 700 74.500px "Liberation Sans", Arial, sans-serif; fill: #f51111; stroke: #fff; stroke-width: 15px; stroke-linejoin: round; paint-order: stroke; }
```
